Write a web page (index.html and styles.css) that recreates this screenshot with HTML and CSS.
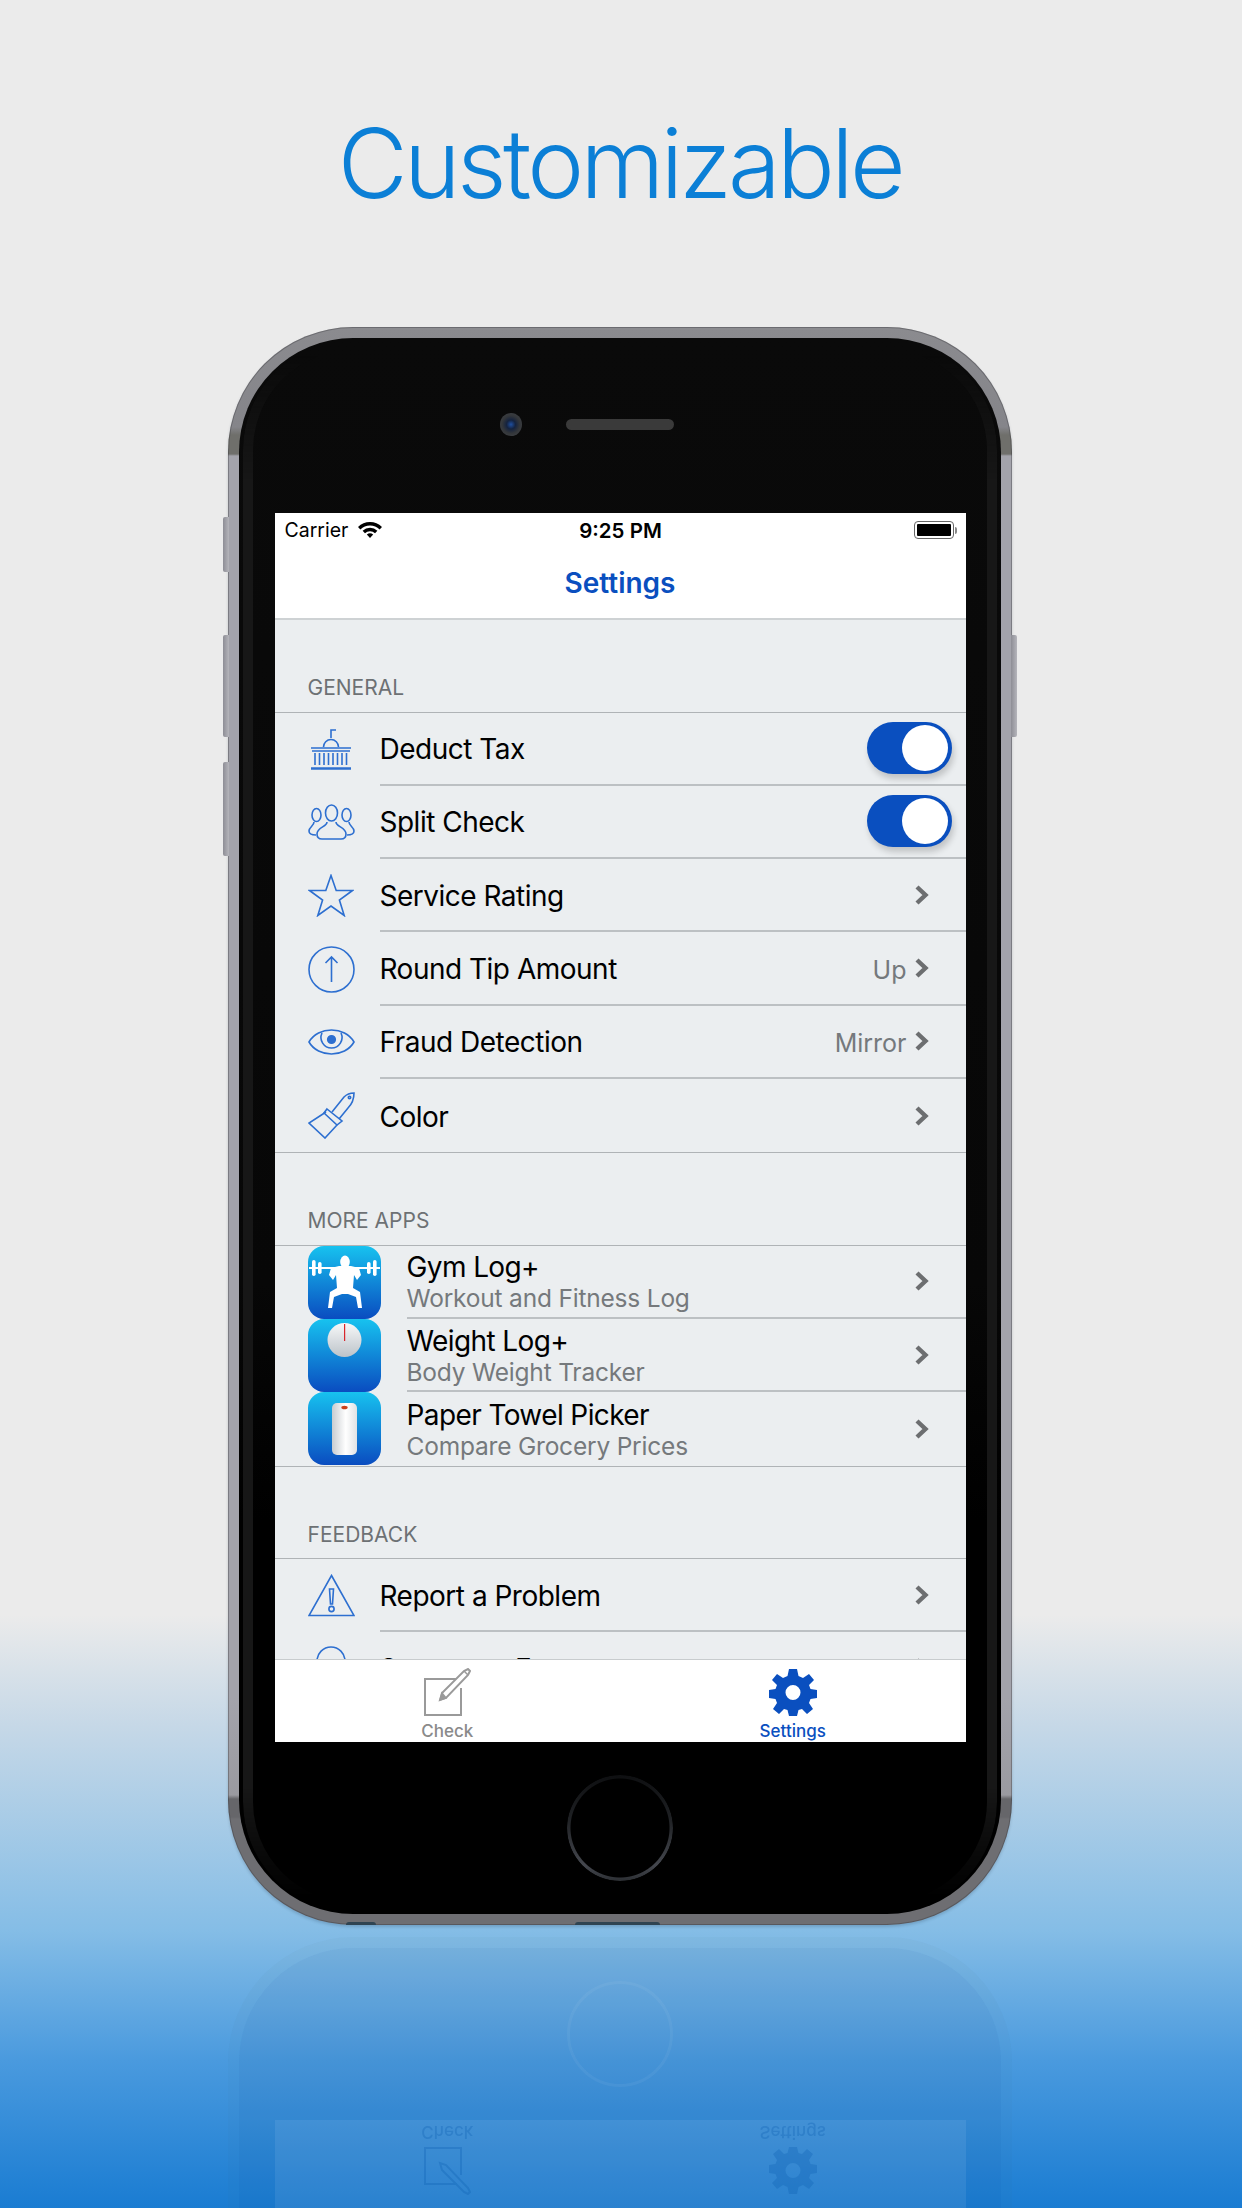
FILE: index.html
```html
<!DOCTYPE html>
<html lang="en">
<head>
    <meta charset="UTF-8">
    <meta name="viewport" content="width=device-width, initial-scale=1.0">
    <title>Customizable</title>
    <link rel="stylesheet" href="styles.css">
</head>
<body>
    <div class="page">
        <h1 class="headline">Customizable</h1>

        <div class="phone">
            <span class="side-btn side-left btn-mute"></span>
            <span class="side-btn side-left btn-up"></span>
            <span class="side-btn side-left btn-down"></span>
            <span class="side-btn side-right btn-power"></span>
            <span class="port port-speaker"></span>
            <span class="port port-jack"></span>
            <div class="bezel">
                <div class="bezel-top">
                    <span class="camera"></span>
                    <span class="speaker"></span>
                </div>
                <div class="screen">
                    <div class="status-bar">
                        <div class="status-left">
                            <span>Carrier</span>
                            <svg class="wifi" viewBox="0 0 24 16">
                                <path d="M1.2 6.200 A15.500 15.500 0 0 1 22.800 6.200" fill="none" stroke="#000" stroke-width="3.4"/>
                                <path d="M5.800 10 A9 9 0 0 1 18.200 10" fill="none" stroke="#000" stroke-width="3.4"/>
                                <path d="M8.800 12.600 L12 16 L15.200 12.600 A4.800 4.800 0 0 0 8.800 12.600 Z" fill="#000"/>
                            </svg>
                        </div>
                        <span class="status-time">9:25 PM</span>
                        <div class="status-right">
                            <span class="battery"><span class="battery-fill"></span></span>
                            <span class="battery-nub"></span>
                        </div>
                    </div>
                    <div class="nav-bar">Settings</div>

                    <div class="scroll">
                        <div class="section-title">GENERAL</div>
                        <div class="section">
                            <div class="row">
                                <div class="row-icon">
                                    <svg width="40" height="41" viewBox="0 0 40 41" class="line-icon">
                                        <path d="M20 9 V1 H25"/>
                                        <path d="M12.500 18 A7.500 7.500 0 0 1 27.500 18"/>
                                        <path d="M0 19 H40 M1 22 H39"/>
                                        <path d="M4 24 V36 M8.500 24 V36 M13 24 V36 M17.500 24 V36 M22 24 V36 M26.500 24 V36 M31 24 V36 M35.500 24 V36"/>
                                        <path d="M0 39.500 H40" stroke-width="2.400"/>
                                    </svg>
                                </div>
                                <div class="row-body">
                                    <span class="row-label">Deduct Tax</span>
                                    <span class="toggle"><span class="knob"></span></span>
                                </div>
                            </div>
                            <div class="row">
                                <div class="row-icon">
                                    <svg width="47" height="36" viewBox="0 0 47 36" class="line-icon">
                                        <ellipse cx="23.500" cy="9" rx="6" ry="8"/>
                                        <ellipse cx="8.500" cy="11" rx="4.500" ry="6.500"/>
                                        <ellipse cx="38.500" cy="11" rx="4.500" ry="6.500"/>
                                        <path d="M19 18 C19 23 9 23 9 30 C9 33 11 35 14 35 H33 C36 35 38 33 38 30 C38 23 28 23 28 18"/>
                                        <path d="M6 18 C6 22 1 23 1 27 C1 30 3 31 8 31"/>
                                        <path d="M41 18 C41 22 46 23 46 27 C46 30 44 31 39 31"/>
                                    </svg>
                                </div>
                                <div class="row-body">
                                    <span class="row-label">Split Check</span>
                                    <span class="toggle"><span class="knob"></span></span>
                                </div>
                            </div>
                            <div class="row">
                                <div class="row-icon">
                                    <svg width="46" height="43" viewBox="0 0 46 43" class="line-icon">
                                        <path d="M23 1.500 L28.200 16.500 L44.500 16.500 L31.400 26 L36.200 41.500 L23 32 L9.800 41.500 L14.600 26 L1.500 16.500 L17.800 16.500 Z"/>
                                    </svg>
                                </div>
                                <div class="row-body">
                                    <span class="row-label">Service Rating</span>
                                    <svg class="chevron" viewBox="0 0 16 22"><path d="M3 3 L11.500 11 L3 19"/></svg>
                                </div>
                            </div>
                            <div class="row">
                                <div class="row-icon">
                                    <svg width="47" height="47" viewBox="0 0 47 47" class="line-icon">
                                        <circle cx="23.500" cy="23.500" r="22.500"/>
                                        <path d="M23.500 36 V11 M17.500 17 L23.500 11 L29.500 17"/>
                                    </svg>
                                </div>
                                <div class="row-body">
                                    <span class="row-label">Round Tip Amount</span>
                                    <span class="row-value">Up</span>
                                    <svg class="chevron" viewBox="0 0 16 22"><path d="M3 3 L11.500 11 L3 19"/></svg>
                                </div>
                            </div>
                            <div class="row">
                                <div class="row-icon">
                                    <svg width="47" height="26" viewBox="0 0 47 26" class="line-icon">
                                        <path d="M1 13 C10 -3 37 -3 46 13 C37 29 10 29 1 13 Z"/>
                                        <path d="M14 4 A10.500 10.500 0 1 0 33 4"/>
                                        <circle cx="23.500" cy="10.500" r="3.800" fill="#2d6fd0"/>
                                    </svg>
                                </div>
                                <div class="row-body">
                                    <span class="row-label">Fraud Detection</span>
                                    <span class="row-value">Mirror</span>
                                    <svg class="chevron" viewBox="0 0 16 22"><path d="M3 3 L11.500 11 L3 19"/></svg>
                                </div>
                            </div>
                            <div class="row">
                                <div class="row-icon">
                                    <svg width="47" height="47" viewBox="0 0 47 47" class="line-icon">
                                        <path d="M24 20 L36 5 C39 2 43 1 46 1 C46 6 44 12 40 16 L31 27"/>
                                        <path d="M19 17 L34 29 L29 33 L16 21 Z"/>
                                        <path d="M18 20 L1 31 L17 46 L29 33"/>
                                        <circle cx="41.500" cy="5.500" r="1.200"/>
                                    </svg>
                                </div>
                                <div class="row-body row-body-last">
                                    <span class="row-label">Color</span>
                                    <svg class="chevron" viewBox="0 0 16 22"><path d="M3 3 L11.500 11 L3 19"/></svg>
                                </div>
                            </div>
                        </div>

                        <div class="section-title">MORE APPS</div>
                        <div class="section">
                            <div class="row">
                                <div class="app-icon">
                                    <svg width="73" height="73" viewBox="0 0 73 73">
                                        <ellipse cx="37" cy="16" rx="4.800" ry="6.500" fill="#fff"/>
                                        <rect x="1" y="21" width="71" height="2" fill="#fff"/>
                                        <rect x="4" y="14" width="3.600" height="16" rx="1.800" fill="#fff"/>
                                        <rect x="10" y="16" width="3.600" height="12" rx="1.800" fill="#fff"/>
                                        <rect x="59" y="16" width="3.600" height="12" rx="1.800" fill="#fff"/>
                                        <rect x="65" y="14" width="3.600" height="16" rx="1.800" fill="#fff"/>
                                        <path d="M31 20 L43 20 L51 22 L53 29 L49 34 L46 29 L45 42 L52 46 L54 62 L50 62 L48 51 L40 48 L34 48 L26 51 L24 62 L20 62 L22 46 L29 42 L28 29 L25 34 L21 29 L23 22 Z" fill="#fff"/>
                                    </svg>
                                </div>
                                <div class="row-body app-body">
                                    <div class="app-text">
                                        <span class="app-name">Gym Log+</span>
                                        <span class="app-sub">Workout and Fitness Log</span>
                                    </div>
                                    <svg class="chevron" viewBox="0 0 16 22"><path d="M3 3 L11.500 11 L3 19"/></svg>
                                </div>
                            </div>
                            <div class="row">
                                <div class="app-icon">
                                    <svg width="73" height="73" viewBox="0 0 73 73">
                                        <defs>
                                            <linearGradient id="dial" x1="0" y1="0" x2="0" y2="1">
                                                <stop offset="0" stop-color="#f7f8f9"/>
                                                <stop offset="1" stop-color="#bcc3c9"/>
                                            </linearGradient>
                                        </defs>
                                        <circle cx="36.500" cy="21" r="17" fill="url(#dial)"/>
                                        <rect x="36" y="5" width="1.200" height="17" fill="#d8262c"/>
                                    </svg>
                                </div>
                                <div class="row-body app-body">
                                    <div class="app-text">
                                        <span class="app-name">Weight Log+</span>
                                        <span class="app-sub">Body Weight Tracker</span>
                                    </div>
                                    <svg class="chevron" viewBox="0 0 16 22"><path d="M3 3 L11.500 11 L3 19"/></svg>
                                </div>
                            </div>
                            <div class="row">
                                <div class="app-icon">
                                    <svg width="73" height="73" viewBox="0 0 73 73">
                                        <defs>
                                            <linearGradient id="roll" x1="0" y1="0" x2="1" y2="0">
                                                <stop offset="0" stop-color="#c8ccd0"/>
                                                <stop offset=".55" stop-color="#ffffff"/>
                                                <stop offset="1" stop-color="#dfe2e4"/>
                                            </linearGradient>
                                        </defs>
                                        <rect x="24" y="11" width="25" height="52" rx="5" fill="url(#roll)"/>
                                        <ellipse cx="36.500" cy="15.500" rx="3.200" ry="1.800" fill="#c8401c"/>
                                    </svg>
                                </div>
                                <div class="row-body app-body row-body-last">
                                    <div class="app-text">
                                        <span class="app-name">Paper Towel Picker</span>
                                        <span class="app-sub">Compare Grocery Prices</span>
                                    </div>
                                    <svg class="chevron" viewBox="0 0 16 22"><path d="M3 3 L11.500 11 L3 19"/></svg>
                                </div>
                            </div>
                        </div>

                        <div class="section-title">FEEDBACK</div>
                        <div class="section">
                            <div class="row">
                                <div class="row-icon">
                                    <svg width="47" height="43" viewBox="0 0 47 43" class="line-icon">
                                        <path d="M23.500 1.500 L46 41.500 H1 Z"/>
                                        <path d="M21.500 15 H25.500 L24.500 30 H22.500 Z"/>
                                        <circle cx="23.500" cy="35" r="2.600"/>
                                    </svg>
                                </div>
                                <div class="row-body">
                                    <span class="row-label">Report a Problem</span>
                                    <svg class="chevron" viewBox="0 0 16 22"><path d="M3 3 L11.500 11 L3 19"/></svg>
                                </div>
                            </div>
                            <div class="row">
                                <div class="row-icon">
                                    <svg width="30" height="47" viewBox="0 0 30 47" class="line-icon">
                                        <path d="M8 34 C8 27 1 24 1 15 A14 14 0 0 1 29 15 C29 24 22 27 22 34 Z"/>
                                    </svg>
                                </div>
                                <div class="row-body">
                                    <span class="row-label">Suggest a Feature</span>
                                    <svg class="chevron" viewBox="0 0 16 22"><path d="M3 3 L11.500 11 L3 19"/></svg>
                                </div>
                            </div>
                        </div>
                    </div>

                    <div class="tab-bar">
                        <div class="tab">
                            <svg width="48" height="48" viewBox="0 0 48 48">
                                <path d="M34 11 H2 V47 H38 V20" fill="none" stroke="#9a9a9a" stroke-width="2"/>
                                <path d="M17 32 L19 25 L41 3 L45 1 L47 3 L45 7 L23 30 Z" fill="#fff" stroke="#9a9a9a" stroke-width="2"/>
                                <path d="M41 3 L45 7 M17 32 L19 25 L23 30 Z" fill="#9a9a9a" stroke="#9a9a9a" stroke-width="1.500"/>
                            </svg>
                            <span class="tab-label">Check</span>
                        </div>
                        <div class="tab tab-active">
                            <svg width="48" height="48" viewBox="0 0 48 48">
                                <path d="M20 1 H28 L29.500 8 L34 10 L40 6 L45 12 L40 17 L41.500 21 L48 22 V30 L41.500 31 L40 35 L44 41 L38 46 L33 41 L29.500 42 L28 48 H20 L18.500 42 L15 41 L10 46 L4 41 L8 35 L6.500 31 L0 30 V22 L6.500 21 L8 17 L3 12 L8 6 L14 10 L18.500 8 Z M24 17 A7.500 7.500 0 1 0 24 32 A7.500 7.500 0 1 0 24 17 Z" fill="#0a4fbf" fill-rule="evenodd"/>
                            </svg>
                            <span class="tab-label">Settings</span>
                        </div>
                    </div>
                </div>
                <div class="bezel-bottom">
                    <span class="home-btn"></span>
                </div>
            </div>
        </div>

        <!-- faint mirror of the phone's lower half on the "floor" -->
        <div class="reflection">
            <div class="mirror">
                <div class="mirror-screen">
                    <div class="mirror-tabs">
                        <div class="tab">
                            <svg width="48" height="48" viewBox="0 0 48 48">
                                <path d="M34 11 H2 V47 H38 V20" fill="none" stroke="#0b5fb0" stroke-width="2"/>
                                <path d="M17 32 L19 25 L41 3 L45 1 L47 3 L45 7 L23 30 Z" fill="none" stroke="#0b5fb0" stroke-width="2"/>
                            </svg>
                            <span class="tab-label">Check</span>
                        </div>
                        <div class="tab">
                            <svg width="48" height="48" viewBox="0 0 48 48">
                                <path d="M20 1 H28 L29.500 8 L34 10 L40 6 L45 12 L40 17 L41.500 21 L48 22 V30 L41.500 31 L40 35 L44 41 L38 46 L33 41 L29.500 42 L28 48 H20 L18.500 42 L15 41 L10 46 L4 41 L8 35 L6.500 31 L0 30 V22 L6.500 21 L8 17 L3 12 L8 6 L14 10 L18.500 8 Z M24 17 A7.500 7.500 0 1 0 24 32 A7.500 7.500 0 1 0 24 17 Z" fill="#0b5fb0" fill-rule="evenodd"/>
                            </svg>
                            <span class="tab-label">Settings</span>
                        </div>
                    </div>
                </div>
                <div class="mirror-chin">
                    <span class="mirror-home"></span>
                </div>
            </div>
        </div>
    </div>
</body>
</html>
```

FILE: styles.css
```css
* {
    box-sizing: border-box;
}
body {
    margin: 0;
    font-family: Inter, "Noto Sans", sans-serif;
}
.page {
    width: 1242px;
    height: 2208px;
    padding-right: 2px;
    overflow: hidden;
    display: flex;
    flex-direction: column;
    align-items: center;
    background: linear-gradient(#ebebeb 0, #ebebeb 1615px, #c6d8e7 1725px, #85bde6 1930px, #4a9ade 2060px, #1a7cd2 2208px);
}
.headline {
    margin: 105px 0 106px;
    font-size: 96px;
    line-height: 116px;
    font-weight: 300;
    letter-spacing: -3.600px;
    color: #0b7fd6;
}

/* phone body */
.phone {
    position: relative;
    flex: none;
    width: 784px;
    height: 1598px;
    padding: 11px;
    border-radius: 125px;
    background: linear-gradient(#8b8b8f 0, #85858a 100px, #6f6f6b 108px, #6f6f6b 127px, #a3a3ab 129px, #a3a3ab 1370px, #9a9aa0 1468px, #66666a 1472px, #66666a 1490px, #6e6e72 1492px);
    box-shadow: inset 0 0 0 1px rgba(50, 50, 55, 0.35), 0 2px 3px rgba(30, 50, 70, 0.2);
}
.side-btn {
    position: absolute;
    width: 6px;
    background: linear-gradient(90deg, #8d8d95, #b5b5bb);
}
.side-left {
    left: -5px;
    border-radius: 2px 0 0 2px;
}
.side-right {
    right: -5px;
    border-radius: 0 2px 2px 0;
}
.btn-mute {
    top: 190px;
    height: 55px;
}
.btn-up {
    top: 308px;
    height: 102px;
}
.btn-down {
    top: 435px;
    height: 94px;
}
.btn-power {
    top: 308px;
    height: 102px;
}
.port {
    position: absolute;
    bottom: 0;
    height: 3px;
    background: #2f4452;
    border-radius: 3px 3px 0 0;
}
.port-speaker {
    left: 347px;
    width: 85px;
}
.port-jack {
    left: 118px;
    width: 30px;
}
.bezel {
    position: relative;
    height: 100%;
    display: flex;
    flex-direction: column;
    align-items: center;
    border-radius: 114px;
    background: linear-gradient(#0a0a0a, #070707 60%, #000 75%);
}
.bezel::before {
    content: "";
    position: absolute;
    inset: 2px 4px;
    border: 10px solid #171717;
    border-radius: 110px;
    -webkit-mask: linear-gradient(transparent 1%, #000 9%, #000 92%, transparent 99%);
    mask: linear-gradient(transparent 1%, #000 9%, #000 92%, transparent 99%);
}
.bezel-top {
    position: relative;
    flex: none;
    height: 175px;
    padding-bottom: 3px;
    display: flex;
    justify-content: center;
    align-items: center;
    gap: 44px;
}
.camera {
    width: 22px;
    height: 23px;
    margin-left: -66px;
    border-radius: 50%;
    background: radial-gradient(circle, #1f4fa0 0, #15233f 28%, #33363a 55%, #45474a 100%);
}
.speaker {
    width: 108px;
    height: 11px;
    border-radius: 6px;
    background: #3a3a3a;
}
.bezel-bottom {
    position: relative;
    flex: 1;
    display: flex;
    align-items: center;
    justify-content: center;
}
.home-btn {
    width: 106px;
    height: 106px;
    border-radius: 50%;
    background: linear-gradient(#0e0f11, #1e2023 40%, #44474e 85%, #2c2f33);
    -webkit-mask: radial-gradient(circle, transparent 49px, #000 50px);
    mask: radial-gradient(circle, transparent 49px, #000 50px);
}

/* app screen */
.screen {
    position: relative;
    flex: none;
    width: 691px;
    height: 1229px;
    display: flex;
    flex-direction: column;
    background: #ebeef0;
    overflow: hidden;
}
.status-bar {
    flex: none;
    height: 34px;
    padding: 0 9px 0 10px;
    display: grid;
    grid-template-columns: 1fr auto 1fr;
    align-items: center;
    background: #fff;
    font-size: 19.500px;
    color: #000;
}
.status-left {
    display: flex;
    align-items: center;
    gap: 10px;
}
.wifi {
    width: 24px;
    height: 16px;
}
.status-time {
    font-weight: 600;
    font-size: 20.500px;
}
.status-right {
    display: flex;
    justify-content: flex-end;
    align-items: center;
    gap: 1px;
}
.battery {
    width: 40px;
    height: 18px;
    padding: 2px;
    border: 1.500px solid #666;
    border-radius: 4px;
    display: block;
}
.battery-fill {
    display: block;
    height: 100%;
    background: #000;
    border-radius: 1px;
}
.battery-nub {
    width: 2px;
    height: 7px;
    background: #888;
    border-radius: 0 2px 2px 0;
}
.nav-bar {
    flex: none;
    height: 73px;
    display: flex;
    align-items: center;
    justify-content: center;
    background: #fff;
    border-bottom: 2px solid #ced2d4;
    font-size: 28px;
    font-weight: 600;
    color: #0a4fbf;
}
.scroll {
    flex: 1;
    min-height: 0;
    overflow: hidden;
}
.section-title {
    height: 91.500px;
    padding: 53px 0 0 33px;
    font-size: 21px;
    line-height: 30px;
    color: #6d7174;
}
.section {
    border-top: 1px solid #afb3b6;
    border-bottom: 1px solid #afb3b6;
}
.row {
    height: 73.300px;
    padding-left: 33px;
    display: flex;
}
.row-icon {
    flex: none;
    width: 72px;
    padding-right: 25px;
    display: flex;
    align-items: center;
    justify-content: center;
}
.line-icon {
    fill: none;
    stroke: #2d6fd0;
    stroke-width: 1.600;
}
.row-body {
    flex: 1;
    min-width: 0;
    display: flex;
    align-items: center;
    padding-right: 36px;
    border-bottom: 2px solid #bcc0c3;
}
.row-body-last {
    border-bottom: none;
}
.row-label {
    flex: 1;
    padding-top: 2px;
    font-size: 28px;
    letter-spacing: -0.500px;
    color: #000;
}
.row-value {
    margin-right: 7px;
    padding-top: 3px;
    font-size: 25px;
    color: #75797c;
}
.chevron {
    flex: none;
    width: 16px;
    height: 22px;
    fill: none;
    stroke: #6c6e70;
    stroke-width: 4.400;
}
.toggle {
    display: flex;
    justify-content: flex-end;
    align-items: center;
    width: 85px;
    height: 52px;
    margin-right: -22px;
    padding-right: 4px;
    border-radius: 26px;
    background: #0a4fbf;
    box-shadow: 2px 5px 6px rgba(0, 0, 0, 0.18);
}
.knob {
    width: 46px;
    height: 46px;
    border-radius: 50%;
    background: #fff;
}
.app-icon {
    flex: none;
    width: 73px;
    height: 73px;
    border-radius: 16px;
    background: linear-gradient(#17c2ef, #0a4cc0);
}
.app-body {
    margin-left: 26px;
}
.app-text {
    flex: 1;
    padding-top: 2px;
    display: flex;
    flex-direction: column;
}
.app-name {
    font-size: 28px;
    line-height: 32px;
    letter-spacing: -0.600px;
    color: #000;
}
.app-sub {
    font-size: 24.500px;
    line-height: 30px;
    letter-spacing: -0.200px;
    color: #75797c;
}
.tab-bar {
    flex: none;
    height: 83px;
    display: flex;
    background: #fff;
    border-top: 1px solid #c8ccce;
}
.tab {
    flex: 1;
    padding-top: 8px;
    display: flex;
    flex-direction: column;
    align-items: center;
}
.tab-label {
    margin-top: 4px;
    font-size: 17px;
    line-height: 22px;
    font-weight: 500;
    color: #8a8a8a;
}
.tab-active .tab-label {
    color: #0a4fbf;
}

/* reflection under the phone */
.reflection {
    flex: none;
    width: 784px;
    height: 271px;
    margin-top: 12px;
    overflow: hidden;
}
.mirror {
    width: 784px;
    height: 271px;
    display: flex;
    flex-direction: column;
    justify-content: flex-end;
    align-items: center;
    transform: scaleY(-1);
    border-radius: 0 0 125px 125px;
    border: 11px solid rgba(70, 90, 110, 0.03);
    border-top: none;
    background: rgba(10, 60, 110, 0.07);
    background-clip: padding-box;
}
.mirror-screen {
    flex: 1;
    width: 691px;
    background: rgba(255, 255, 255, 0.08);
    display: flex;
    align-items: flex-end;
}
.mirror-tabs {
    width: 100%;
    height: 83px;
    display: flex;
    opacity: 0.3;
}
.mirror-tabs .tab-label {
    color: #0b5fb0;
}
.mirror-chin {
    flex: none;
    height: 172px;
    display: flex;
    align-items: center;
    justify-content: center;
}
.mirror-home {
    width: 106px;
    height: 106px;
    border: 3px solid rgba(255, 255, 255, 0.05);
    border-radius: 50%;
}
```
